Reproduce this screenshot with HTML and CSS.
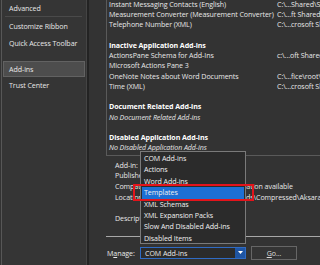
FILE: index.html
```html
<!DOCTYPE html>
<html lang="en">
<head>
    <meta charset="UTF-8">
    <title>Add-ins</title>
    <link rel="stylesheet" href="styles.css">
</head>
<body>
<div class="window">
    <ul class="nav">
        <li class="item">Advanced</li>
        <li class="sep"></li>
        <li class="item">Customize Ribbon</li>
        <li class="item">Quick Access Toolbar</li>
        <li class="sep sep-wide"></li>
        <li class="item active">Add-ins</li>
        <li class="item">Trust Center</li>
    </ul>
    <div class="divider"></div>
    <div class="main">
        <div class="addins">
            <div class="row"><span class="name">Instant Messaging Contacts (English)</span><span class="loc">C:\...Shared\Smart Tag\IMCONTACT.DLL</span></div>
            <div class="row"><span class="name">Measurement Converter (Measurement Converter)</span><span class="loc">C:\...ft Shared\Smart Tag\METCONV.DLL</span></div>
            <div class="row"><span class="name">Telephone Number (XML)</span><span class="loc">C:\...crosoft Shared\Smart Tag\MOFL.DLL</span></div>
            <div class="row"></div>
            <div class="row head">Inactive Application Add-ins</div>
            <div class="row"><span class="name">ActionsPane Schema for Add-Ins</span><span class="loc">c:\...oft Shared\VSTO\ActionsPane3.xsd</span></div>
            <div class="row"><span class="name">Microsoft Actions Pane 3</span><span class="loc"></span></div>
            <div class="row"><span class="name">OneNote Notes about Word Documents</span><span class="loc">C:\...fice\root\Office16\ONBttnWD.dll</span></div>
            <div class="row"><span class="name">Time (XML)</span><span class="loc">C:\...crosoft Shared\Smart Tag\MOFL.DLL</span></div>
            <div class="row"></div>
            <div class="row head">Document Related Add-ins</div>
            <div class="row none">No Document Related Add-ins</div>
            <div class="row"></div>
            <div class="row head">Disabled Application Add-ins</div>
            <div class="row none">No Disabled Application Add-ins</div>
        </div>
        <div class="details">
            <div class="drow"><span class="label">Add-in:</span><span class="value">Time (XML)</span></div>
            <div class="drow"><span class="label">Publisher:</span><span class="value">Microsoft</span></div>
            <div class="drow"><span class="label">Compatibility:</span><span class="value">No compatibility information available</span></div>
            <div class="drow"><span class="label">Location:</span><span class="value">C:\Users\User\Downloads\Compressed\Aksara Jawa\Aksara.dotm</span></div>
            <div class="drow desc"><span class="label">Description:</span><span class="value">Time</span></div>
        </div>
        <div class="manage">
            <span class="manage-label">M<u>a</u>nage:</span>
            <div class="select">
                <span class="select-text">COM Add-ins</span>
                <span class="select-btn"><svg width="5" height="3" viewBox="0 0 5 3"><path d="M0 0H5L2.5 3Z" fill="#fff"/></svg></span>
            </div>
            <div class="go-btn"><u>G</u>o...</div>
        </div>
        <ul class="popup">
            <li>COM Add-ins</li>
            <li>Actions</li>
            <li>Word Add-ins</li>
            <li class="hover">Templates</li>
            <li>XML Schemas</li>
            <li>XML Expansion Packs</li>
            <li>Slow And Disabled Add-ins</li>
            <li>Disabled Items</li>
        </ul>
        <div class="marker"></div>
    </div>
</div>
</body>
</html>
```

FILE: styles.css
```css
*{
    margin: 0;
    padding: 0;
    box-sizing: border-box;
}
ul{
    list-style-type: none;
}
body{
    width: 320px;
    height: 265px;
    overflow: hidden;
    background-color: #333;
    color: #e8e8e8;
    font-family: "Open Sans", "Noto Sans", sans-serif;
    font-size: 7.1px;
    letter-spacing: -0.08px;
}
.window{
    display: flex;
    height: 265px;
}
.nav{
    flex: 0 0 85px;
    margin-left: 1px;
    border-left: 1px solid #575757;
    padding: 0 1px;
    background-color: #353535;
}
.nav .item{
    height: 16.3px;
    line-height: 16.3px;
    padding-left: 6px;
    white-space: nowrap;
}
.nav .sep{
    height: 2px;
    margin: 0 3px 0 2px;
    border-top: 1px solid #4a4a4a;
}
.nav .sep-wide{
    height: 10px;
    border-top: none;
}
.nav .active{
    background-color: #4d4d4d;
    border: 1px solid #626262;
    line-height: 14.3px;
    padding-left: 5px;
}
.divider{
    flex: 0 0 3px;
    border-left: 1px solid #444;
    background-color: #232323;
}
.main{
    flex: 1;
    min-width: 0;
    position: relative;
    overflow: hidden;
}
.addins{
    margin: -1.1px 0 0 17px;
    padding: 0 0 2.5px 2px;
    border-left: 1px solid #5a5a5a;
    border-bottom: 1px solid #5a5a5a;
    width: 400px;
}
.row{
    display: flex;
    height: 10.25px;
    line-height: 10.25px;
    white-space: nowrap;
}
.row .name{
    flex: 0 0 168px;
}
.row .loc{
    flex: 0 0 auto;
}
.row.head{
    font-weight: bold;
    color: #fff;
}
.row.none{
    font-style: italic;
}
.details{
    margin-top: 3.6px;
    padding-left: 26px;
}
.drow{
    display: flex;
    height: 10.7px;
    line-height: 10.7px;
    white-space: nowrap;
}
.drow .label{
    flex: 0 0 55px;
}
.drow .value{
    flex: 0 0 auto;
}
.drow.desc{
    margin-top: 10px;
}
.manage{
    margin: 13px 0 0 17px;
    padding: 8.5px 0 0 1px;
    border-top: 1px solid #a8a8a8;
    display: flex;
    align-items: center;
}
.manage-label{
    flex: 0 0 33px;
}
.select{
    flex: 0 0 106px;
    height: 12px;
    border: 1px solid #2f6bc4;
    background-color: #2b2b2b;
    display: flex;
    align-items: center;
}
.select-text{
    flex: 1;
    padding-left: 4px;
}
.select-btn{
    width: 10px;
    height: 10px;
    background-color: #1f55a3;
    display: flex;
    align-items: center;
    justify-content: center;
}
.go-btn{
    flex: 0 0 46px;
    height: 14px;
    margin-left: 5px;
    border: 1px solid #666;
    background-color: #343434;
    line-height: 12px;
    text-align: center;
    color: #ddd;
}
.popup{
    position: absolute;
    left: 51px;
    top: 151px;
    width: 106px;
    height: 93px;
    padding: 1px 1px 0 1px;
    border: 1px solid #7a7a7a;
    background-color: #2b2b2b;
}
.popup li{
    height: 11.4px;
    line-height: 11.4px;
    padding-left: 2px;
    color: #f0f0f0;
}
.popup .hover{
    background-color: #1d6fd4;
}
.marker{
    position: absolute;
    left: 44px;
    top: 184px;
    width: 121px;
    height: 17px;
    border: 2px solid #e3141b;
}
```
